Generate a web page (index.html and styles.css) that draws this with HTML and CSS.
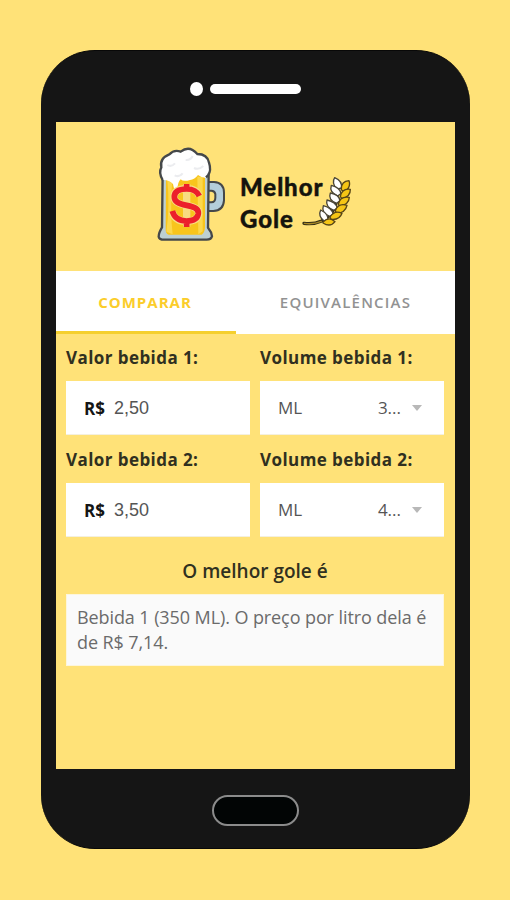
FILE: index.html
```html
<!DOCTYPE html>
<html lang="pt-BR">
<head>
<meta charset="utf-8">
<title>Melhor Gole</title>
<link rel="stylesheet" href="styles.css">
</head>
<body>
<div class="phone">
  <div class="speaker"><span class="camera"></span><span class="earpiece"></span></div>
  <main class="screen">
    <header class="brand">
      <svg class="mug" viewBox="0 0 330 330" aria-hidden="true">
        <path d="M168 126H192Q222 128 222 158V181Q220 212 190 213H166V187H184Q196 186 196 173V162Q194 152 184 152H168Z" fill="#b4cedb" stroke="#45484a" stroke-width="6"/>
        <path d="M38 98L36 262Q26 278 26 290Q28 299 42 299H170Q184 299 186 289Q185 276 174 263L176 98Z" fill="#bdd0d2" stroke="#45484a" stroke-width="7"/>
        <path d="M48 105H165V262Q164 279 155 284H56Q46 282 47 265Z" fill="#f8c51c"/>
        <path d="M52 120Q60 200 49 275L68 283Q60 220 66 130ZM142 110H158V274L145 283Z" fill="#fcd84c"/>
        <path d="M40 120Q25 98 34 82Q28 55 58 43Q72 28 92 35Q118 14 142 42Q172 42 177 68Q185 92 174 106L168 114Q154 113 144 105Q134 118 120 120Q100 126 92 118Q84 124 82 148Q75 163 69 132Q56 119 40 120Z" fill="#fff"/>
        <path d="M38 120Q25 98 34 82Q28 55 58 43Q72 28 92 35Q118 14 142 42Q172 42 177 68Q185 92 174 106L168 112" fill="none" stroke="#45484a" stroke-width="7"/>
        <path d="M52 75Q64 82 75 70M107 60Q122 61 128 48M132 84Q146 91 160 78M74 106Q88 113 98 100" fill="none" stroke="#ebecef" stroke-width="6"/>
        <g fill="none" stroke="#f8dc80" stroke-width="22"><path d="M148 168Q140 146 110 146Q72 146 72 171Q72 190 110 196Q148 202 146 222Q143 244 109 244Q74 243 67 216M110 132V260"/></g>
        <path d="M148 168Q138 147 110 147Q73 147 73 171Q73 190 110 196Q147 202 145 221Q142 243 109 243Q75 242 67 213M110 132V150M110 241V261" fill="none" stroke="#ec202b" stroke-width="17"/>
      </svg>
      <h1 class="name">Melhor<br>Gole</h1>
      <svg class="wheat" viewBox="216 48 150 156" aria-hidden="true">
        <path d="M222 190Q250 194 275 183Q327 158 320 84" fill="none" stroke="#332e18" stroke-width="10" stroke-linecap="round"/>
        <path d="M223 190Q250 194 274 184" fill="none" stroke="#a88926" stroke-width="4" stroke-linecap="round"/>
        <g fill="#fff" stroke="#4a4638" stroke-width="4" stroke-linejoin="round">
          <path d="M320 88Q304 68 314 53Q338 63 334 84Z"/>
          <path d="M323 108Q297 97 304 76Q330 82 333 101Z"/>
          <path d="M320 130Q293 120 301 99Q328 104 330 122Z"/>
          <path d="M312 151Q285 141 291 120Q318 126 322 144Z"/>
          <path d="M299 169Q273 158 280 137Q307 144 309 163Z"/>
          <path d="M283 184Q263 168 272 150Q296 162 294 181Z"/>
        </g>
        <g fill="#f5c515" stroke="#574517" stroke-width="4" stroke-linejoin="round">
          <path d="M334 89Q333 64 357 62Q364 82 343 96Z"/>
          <path d="M331 110Q336 84 361 88Q362 110 336 116Z"/>
          <path d="M325 132Q331 107 358 112Q357 134 329 139Z"/>
          <path d="M316 152Q325 128 351 136Q346 159 319 160Z"/>
          <path d="M300 171Q314 149 336 160Q329 181 303 178Z"/>
          <path d="M279 186Q297 168 315 185Q301 203 279 189Z"/>
        </g>
      </svg>
    </header>
    <nav class="tabs">
      <a class="tab active">COMPARAR</a>
      <a class="tab">EQUIVALÊNCIAS</a>
    </nav>
    <form class="compare">
      <div class="field">
        <label>Valor bebida 1:</label>
        <div class="box"><b class="currency">R$</b><span class="amount">2,50</span></div>
      </div>
      <div class="field">
        <label>Volume bebida 1:</label>
        <div class="box"><span class="unit">ML</span><span class="size">3...</span><i class="caret"></i></div>
      </div>
      <div class="field">
        <label>Valor bebida 2:</label>
        <div class="box"><b class="currency">R$</b><span class="amount">3,50</span></div>
      </div>
      <div class="field">
        <label>Volume bebida 2:</label>
        <div class="box"><span class="unit">ML</span><span class="size">4...</span><i class="caret"></i></div>
      </div>
    </form>
    <section class="result">
      <h2>O melhor gole é</h2>
      <p>Bebida 1 (350 ML). O preço por litro dela é<br>de R$ 7,14.</p>
    </section>
  </main>
  <div class="home"></div>
</div>
</body>
</html>
```
FILE: styles.css
```css
* { box-sizing: border-box; }

body {
  margin: 0;
  height: 900px;
  padding: 50px 40px 0 41px;
  background: #ffe278;
  font-family: "Open Sans", sans-serif;
  color: #303020;
}

.phone {
  height: 799px;
  padding: 0 15px;
  background: #151515;
  border: 1px solid #080808;
  border-width: 1px 0;
  border-radius: 54px;
}

.speaker {
  height: 71px;
  padding: 5px 0 0 134px;
  display: flex;
  align-items: center;
  gap: 7px;
}

.camera {
  width: 13px;
  height: 14px;
  border-radius: 50%;
  background: #fff;
}

.earpiece {
  width: 91px;
  height: 10px;
  border-radius: 5px;
  background: #fff;
}

.screen {
  height: 647px;
  background: #ffe278;
}

.brand {
  height: 149px;
  padding: 18px 0 0 94px;
  display: flex;
}

.mug { width: 110px; height: 110px; flex: none; }

.name {
  margin: 31px 0 0 -20px;
  width: 86px;
  font: 900 24px/32px Lato, sans-serif;
  letter-spacing: 0.9px;
  color: #15140d;
  -webkit-text-stroke: 0.4px #15140d;
}

.wheat { width: 50px; height: 52px; margin: 36px 0 0 -24px; }

.tabs {
  height: 63px;
  display: grid;
  grid-template-columns: 180px 1fr;
  background: #fff;
}

.tab {
  padding-bottom: 1px;
  display: flex;
  align-items: center;
  justify-content: center;
  font-size: 15px;
  font-weight: 600;
  letter-spacing: 1.2px;
  color: #929292;
}

.active {
  padding: 2px 2px 0 0;
  border-bottom: 3px solid #f5cf2e;
  font-weight: 700;
  letter-spacing: 1px;
  color: #fbcd2b;
}

.compare {
  padding: 0 11px 0 10px;
  display: grid;
  grid-template-columns: 184px 184px;
  column-gap: 10px;
}

.field { height: 102px; }

label {
  display: block;
  height: 47px;
  line-height: 47px;
  font-size: 17px;
  font-weight: 700;
  letter-spacing: 0.43px;
  white-space: nowrap;
}

.box {
  height: 54px;
  padding: 0 22px 0 18px;
  display: flex;
  align-items: center;
  background: #fff;
  border-bottom: 1px solid #f4f0df;
  font-size: 17px;
  color: #555;
}

.currency { font-size: 17px; color: #151515; padding-top: 2px; }

.amount {
  margin-left: 9px;
  padding-top: 1px;
  font-family: "Liberation Sans", sans-serif;
  font-size: 18px;
}

.size { margin-left: auto; }

.caret {
  margin-left: 11px;
  border: 5.5px solid transparent;
  border-top: 6px solid #b8b8b8;
  border-bottom: 0;
}

.result { padding: 10px 11px 0 10px; }

h2 {
  margin: 0;
  height: 46px;
  line-height: 46px;
  text-align: center;
  font-size: 19px;
  font-weight: 600;
}

p {
  margin: 0;
  height: 72px;
  padding: 10px 0 0 10px;
  background: #fafafa;
  border: 1px solid #fdf6dc;
  font-size: 18px;
  line-height: 25px;
  letter-spacing: -0.09px;
  color: #6b6b6b;
  white-space: nowrap;
}

.home {
  width: 87px;
  height: 31px;
  margin: 26px 0 0 156px;
  border: 2px solid #8b8b8b;
  border-radius: 16px;
  background: #020505;
}
```
